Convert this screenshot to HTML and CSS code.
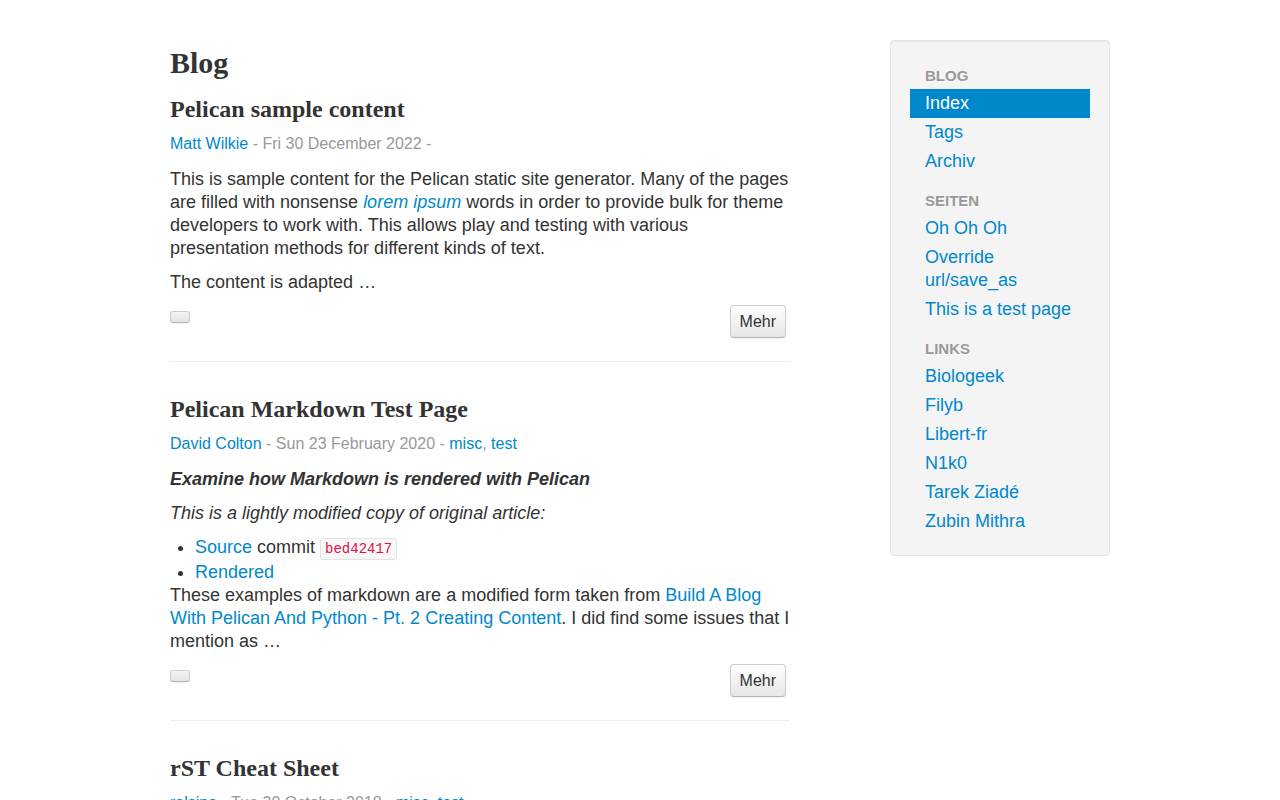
FILE: index.html
```html
<!DOCTYPE html>
<html lang="de">
<head>
<meta charset="utf-8">
<title>Blog</title>
<link rel="stylesheet" href="styles.css">
</head>
<body>
<div class="container">
  <main class="main">
    <h1 class="page-title">Blog</h1>

    <article class="post">
      <h2 class="post-title"><a href="#">Pelican sample content</a></h2>
      <div class="meta"><a href="#">Matt Wilkie</a> - Fri 30 December 2022 - </div>
      <div class="summary">
        <p>This is sample content for the Pelican static site generator. Many of the pages are filled with nonsense <em><a href="#">lorem ipsum</a></em> words in order to provide bulk for theme developers to work with. This allows play and testing with various presentation methods for different kinds of text.</p>
        <p>The content is adapted …</p>
      </div>
      <div class="actions"><span class="btn btn-empty"></span><a class="btn" href="#">Mehr</a></div>
    </article>
    <hr class="divider">

    <article class="post">
      <h2 class="post-title"><a href="#">Pelican Markdown Test Page</a></h2>
      <div class="meta"><a href="#">David Colton</a> - Sun 23 February 2020 - <a href="#">misc</a>, <a href="#">test</a></div>
      <div class="summary">
        <p><strong><em>Examine how Markdown is rendered with Pelican</em></strong></p>
        <p><em>This is a lightly modified copy of original article:</em></p>
        <ul class="list">
          <li><a href="#">Source</a> commit <code>bed42417</code></li>
          <li><a href="#">Rendered</a></li>
        </ul>
        <p>These examples of markdown are a modified form taken from <a href="#">Build A Blog With Pelican And Python - Pt. 2 Creating Content</a>. I did find some issues that I mention as …</p>
      </div>
      <div class="actions"><span class="btn btn-empty"></span><a class="btn" href="#">Mehr</a></div>
    </article>
    <hr class="divider">

    <article class="post">
      <h2 class="post-title"><a href="#">rST Cheat Sheet</a></h2>
      <div class="meta"><a href="#">ralsina</a> - Tue 30 October 2018 - <a href="#">misc</a>, <a href="#">test</a></div>
    </article>
  </main>

  <aside class="sidebar">
    <div class="well">
      <ul class="nav-list">
        <li class="nav-header first">Blog</li>
        <li class="active"><a href="#">Index</a></li>
        <li><a href="#">Tags</a></li>
        <li><a href="#">Archiv</a></li>
        <li class="nav-header">Seiten</li>
        <li><a href="#">Oh Oh Oh</a></li>
        <li><a href="#">Override url/save_as</a></li>
        <li><a href="#">This is a test page</a></li>
        <li class="nav-header">Links</li>
        <li><a href="#">Biologeek</a></li>
        <li><a href="#">Filyb</a></li>
        <li><a href="#">Libert-fr</a></li>
        <li><a href="#">N1k0</a></li>
        <li><a href="#">Tarek Ziadé</a></li>
        <li><a href="#">Zubin Mithra</a></li>
      </ul>
    </div>
  </aside>
</div>
</body>
</html>
```

FILE: styles.css
```css
html, body {
  margin: 0;
  padding: 0;
  background: #fff;
}

body {
  font-family: "Liberation Sans", Arial, Helvetica, sans-serif;
  font-size: 18px;
  line-height: 23px;
  color: #333;
}

a {
  color: #0088cc;
  text-decoration: none;
}

.container {
  width: 940px;
  margin: 0 auto;
  padding-top: 40px;
  display: flex;
  align-items: flex-start;
}

.main {
  width: 620px;
  flex: none;
}

.page-title {
  font-family: "Liberation Serif", "Times New Roman", serif;
  font-size: 30px;
  font-weight: bold;
  line-height: 46px;
  margin: 0 0 5px;
  color: #333;
}

.post-title {
  font-family: "Liberation Serif", "Times New Roman", serif;
  font-size: 24px;
  font-weight: bold;
  line-height: 36px;
  margin: 0 0 5px;
}

.post-title a {
  color: #333;
}

.meta {
  font-size: 16px;
  line-height: 23px;
  color: #999;
  margin-bottom: 13px;
}

.summary p {
  margin: 0 0 11px;
}

.summary em a {
  font-style: italic;
}

.list {
  margin: 0;
  padding-left: 25px;
}

code {
  font-family: "Liberation Mono", "DejaVu Sans Mono", monospace;
  font-size: 14px;
  color: #dd1144;
  background: #f7f7f9;
  border: 1px solid #e1e1e8;
  border-radius: 3px;
  padding: 2px 4px;
}

.actions {
  display: flex;
  justify-content: space-between;
  align-items: flex-start;
  margin-top: 2px;
  padding-right: 4px;
}

.btn {
  display: inline-block;
  font-size: 16px;
  line-height: 23px;
  padding: 4px 9px;
  color: #333;
  background-color: #f5f5f5;
  background-image: linear-gradient(to bottom, #ffffff, #e6e6e6);
  border: 1px solid #cccccc;
  border-bottom-color: #b3b3b3;
  border-radius: 4px;
  box-shadow: inset 0 1px 0 rgba(255,255,255,.2), 0 1px 2px rgba(0,0,0,.05);
}

.btn-empty {
  width: 18px;
  height: 10px;
  padding: 0;
  margin-top: 6px;
  border-radius: 3px;
  background-image: linear-gradient(to bottom, #f3f3f3, #e4e4e4);
}

.divider {
  margin: 23px 0 28px;
  border: 0;
  border-top: 1px solid #eeeeee;
  border-bottom: 1px solid #ffffff;
  height: 0;
}

.sidebar {
  width: 220px;
  flex: none;
  margin-left: 100px;
}

.well {
  background: #f4f4f4;
  border: 1px solid #e5e5e5;
  border-radius: 4px;
  padding: 21px 19px 19px;
  box-shadow: inset 0 1px 1px rgba(0,0,0,.05);
}

.nav-list {
  list-style: none;
  margin: 0;
  padding: 0;
}

.nav-list li a {
  display: block;
  padding: 3px 15px;
  line-height: 23px;
  color: #0088cc;
}

.nav-list li.active a {
  background: #0088cc;
  color: #fff;
}

.nav-header {
  font-size: 15px;
  font-weight: bold;
  line-height: 21px;
  text-transform: uppercase;
  color: #999;
  padding: 3px 15px;
  margin-top: 11px;
  text-shadow: 0 1px 0 rgba(255,255,255,.5);
}

.nav-header.first {
  margin-top: 0;
}
```
